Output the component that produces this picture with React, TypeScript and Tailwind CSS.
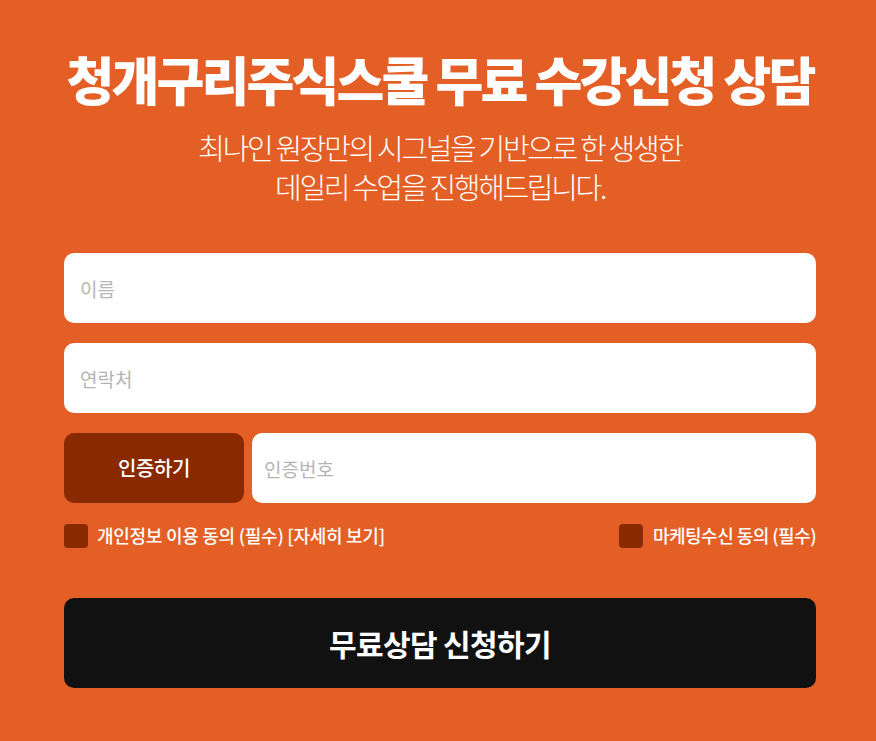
import React from "react";

export default function App() {
  const font = { fontFamily: '"Noto Sans CJK KR", "Noto Sans", sans-serif' };
  return (
    <div className="min-h-[741px] w-full bg-[#e35f26]" style={font}>
      <div className="pl-[64px] pr-[60px] pt-[45px] pb-[53px]">
        <h1 className="-mx-[20px] whitespace-nowrap text-center text-[52px] font-black leading-[68px] tracking-[-0.055em] text-white">
          청개구리주식스쿨 무료 수강신청 상담
        </h1>
        <p className="mt-[15px] text-center text-[29px] font-light leading-[39px] tracking-[-0.08em] text-white">
          최나인 원장만의 시그널을 기반으로 한 생생한
          <br />
          데일리 수업을 진행해드립니다.
        </p>
        <div className="mt-[47px] flex flex-col gap-[20px]">
          <input
            className="h-[70px] w-full rounded-[10px] bg-white px-[16px] text-[19px] text-[#333] outline-none placeholder:text-[#b5b5b5]"
            placeholder="이름"
          />
          <input
            className="h-[70px] w-full rounded-[10px] bg-white px-[16px] text-[19px] text-[#333] outline-none placeholder:text-[#b5b5b5]"
            placeholder="연락처"
          />
          <div className="flex gap-[8px]">
            <button className="h-[70px] w-[180px] shrink-0 rounded-[10px] bg-[#882900] text-[20px] font-medium tracking-[-0.02em] text-white">
              인증하기
            </button>
            <input
              className="h-[70px] min-w-0 flex-1 rounded-[10px] bg-white px-[12px] text-[19px] text-[#333] outline-none placeholder:text-[#b5b5b5]"
              placeholder="인증번호"
            />
          </div>
        </div>
        <div className="mt-[19px] flex items-center justify-between">
          <label className="flex items-center gap-[9px]">
            <span className="block h-[24px] w-[24px] rounded-[4px] bg-[#882900]" />
            <span className="text-[18px] font-medium tracking-[-0.015em] text-white">
              개인정보 이용 동의 (필수) [자세히 보기]
            </span>
          </label>
          <label className="flex items-center gap-[10px]">
            <span className="block h-[24px] w-[24px] rounded-[4px] bg-[#882900]" />
            <span className="text-[18px] font-medium tracking-[-0.03em] text-white">
              마케팅수신 동의 (필수)
            </span>
          </label>
        </div>
        <button className="mt-[49px] h-[90px] w-full rounded-[10px] bg-[#111111] text-[30px] font-bold tracking-[-0.02em] text-white">
          무료상담 신청하기
        </button>
      </div>
    </div>
  );
}
